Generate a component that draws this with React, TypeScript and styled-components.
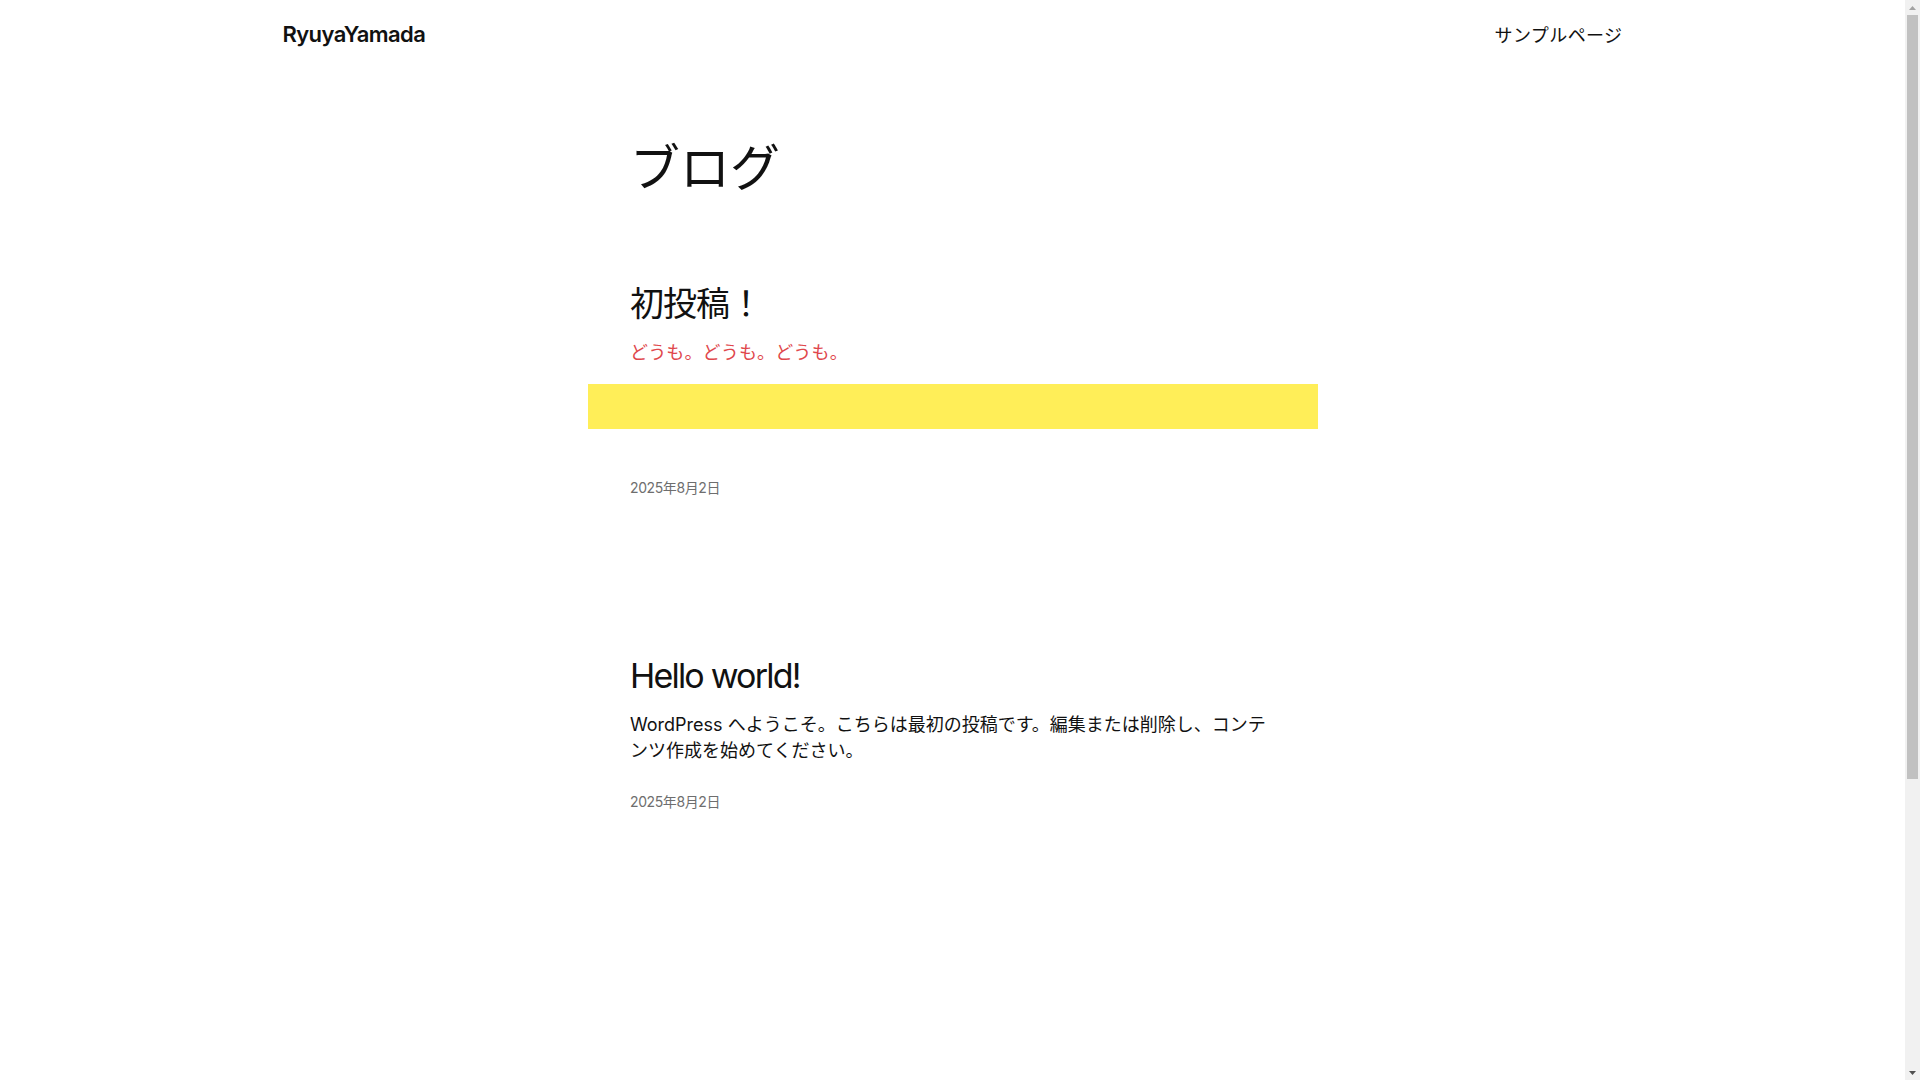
import React from "react";
import styled, { createGlobalStyle } from "styled-components";

const GlobalStyle = createGlobalStyle`
  html, body {
    margin: 0;
    padding: 0;
    background: #ffffff;
  }

  body {
    font-family: Inter, "Noto Sans CJK JP", sans-serif;
    color: #111111;
    -webkit-font-smoothing: antialiased;
  }
`;

// the reference shows a classic 15px scrollbar, the page flows in what is left
const Page = styled.div`
  width: calc(100% - 15px);
  min-height: 1484px;
  display: flex;
  flex-direction: column;
`;

const Scrollbar = styled.div`
  position: fixed;
  top: 0;
  right: 0;
  width: 15px;
  height: 100vh;
  background: #f1f1f1;
  display: flex;
  flex-direction: column;
`;

const ScrollArrow = styled.div<{ $down?: boolean; $color: string }>`
  height: 15px;
  display: flex;
  align-items: center;
  justify-content: center;
  margin-top: ${(p) => (p.$down ? "auto" : "0")};
`;

const ScrollThumb = styled.div`
  margin: 0 2px;
  height: 764px;
  background: #c1c1c1;
`;

const Header = styled.header`
  width: 1340px;
  max-width: 100%;
  height: 68px;
  margin: 0 auto;
  display: flex;
  align-items: center;
  justify-content: space-between;
`;

const Logo = styled.a`
  font-size: 22px;
  font-weight: 600;
  letter-spacing: -0.6px;
  color: #111111;
  text-decoration: none;
`;

const NavLink = styled.a`
  font-size: 18px;
  letter-spacing: 0.4px;
  color: #111111;
  text-decoration: none;
`;

const Main = styled.main`
  width: 645px;
  margin: 70px auto 0;
`;

const PageTitle = styled.h1`
  margin: 0;
  font-size: 50px;
  font-weight: 400;
  line-height: 60px;
`;

const PostList = styled.div`
  margin-top: 85px;
  display: flex;
  flex-direction: column;
  gap: 157px;
`;

const Post = styled.article`
  display: flex;
  flex-direction: column;
`;

const PostTitle = styled.h2<{ $tracking: number }>`
  margin: 0;
  font-size: 34px;
  font-weight: 400;
  line-height: 41px;
  letter-spacing: ${(p) => p.$tracking}px;
`;

const Excerpt = styled.p<{ $color?: string; $tracking?: number }>`
  margin: 16px 0 0;
  font-size: 18px;
  line-height: 26px;
  color: ${(p) => p.$color ?? "#111111"};
  letter-spacing: ${(p) => p.$tracking ?? 0}px;
`;

const Highlight = styled.div`
  margin: 18px -43px 0 -42px;
  height: 45px;
  background: #ffee58;
`;

const PostDate = styled.time<{ $gap: number }>`
  display: block;
  margin-top: ${(p) => p.$gap}px;
  font-size: 14px;
  line-height: 21px;
  color: #6e6e6e;
  letter-spacing: -0.4px;
`;

const Arrow = ({ down, color }: { down?: boolean; color: string }) => (
  <svg width="7" height="4" viewBox="0 0 7 4">
    <path d={down ? "M0 0h7L3.5 4z" : "M0 4h7L3.5 0z"} fill={color} />
  </svg>
);

export default function App() {
  return (
    <>
      <GlobalStyle />
      <Page>
        <Header>
          <Logo href="#">RyuyaYamada</Logo>
          <NavLink href="#">サンプルページ</NavLink>
        </Header>
        <Main>
          <PageTitle>ブログ</PageTitle>
          <PostList>
            <Post>
              <PostTitle $tracking={-1}>初投稿！</PostTitle>
              <Excerpt $color="#e0474c" $tracking={0.15}>
                どうも。どうも。どうも。
              </Excerpt>
              <Highlight />
              <PostDate $gap={48}>2025年8月2日</PostDate>
            </Post>
            <Post>
              <PostTitle $tracking={-1.8}>Hello world!</PostTitle>
              <Excerpt>
                WordPress へようこそ。こちらは最初の投稿です。編集または削除し、コンテンツ作成を始めてください。
              </Excerpt>
              <PostDate $gap={27}>2025年8月2日</PostDate>
            </Post>
          </PostList>
        </Main>
      </Page>
      <Scrollbar>
        <ScrollArrow $color="#a3a3a3">
          <Arrow color="#a3a3a3" />
        </ScrollArrow>
        <ScrollThumb />
        <ScrollArrow $down $color="#505050">
          <Arrow down color="#505050" />
        </ScrollArrow>
      </Scrollbar>
    </>
  );
}
